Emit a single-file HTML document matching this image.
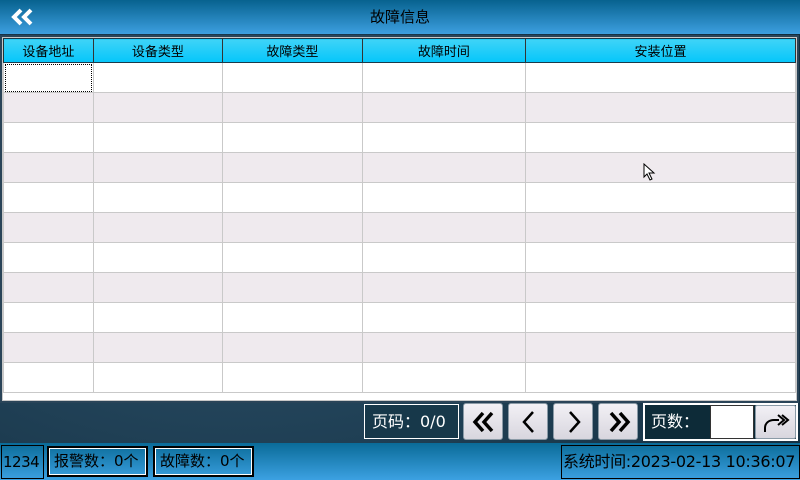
<!DOCTYPE html>
<html><head><meta charset="utf-8"><style>
*{margin:0;padding:0;box-sizing:border-box}
body{width:800px;height:480px;overflow:hidden;font-family:"DejaVu Sans","Noto Sans CJK SC",sans-serif;position:relative;background:radial-gradient(ellipse at 30% 60%,#2a4e66,#173447 70%,#102a3a);}
.hdr{position:absolute;left:0;top:0;width:800px;height:34px;background:linear-gradient(#07628f,#3d9fe0);color:#000;font-size:15px;text-align:center;line-height:34px}
.hdr svg{position:absolute;left:10px;top:8px}
.tbl{position:absolute;left:0px;top:35px;width:799px;height:368px;background:#2a4458;}
.inner{position:absolute;left:2px;top:2px;width:795px;height:364px;background:#fff;border:1px solid #c8c8c8;}
table{border-collapse:collapse;position:absolute;left:0;top:0;table-layout:fixed}
td,th{border:1px solid #c9c9c9;padding:0;font-weight:normal;font-size:13px}
th{height:24px;background:linear-gradient(#3fd3f7,#05c6fb);border-color:#1a3a4a #233 #1a3a4a #233;border-right:1px solid #333;color:#000}
td{height:30px}
tr.a td{background:#efeaee}
.st{position:absolute;left:0;top:443px;width:800px;height:37px;background:linear-gradient(#0a6b98,#3ca1e2)}
.box{position:absolute;border:1px solid #000;font-size:15px;line-height:28px;color:#000}
.btn{position:absolute;top:403px;width:40px;height:37px;background:linear-gradient(#f2f0f5,#d8d6de);border-radius:3px;border:1px solid #8a9aa6}
.btn svg{position:absolute;left:7px;top:7px}
</style></head><body>
<div class="hdr"><svg width="24" height="18" viewBox="0 0 24 18"><path d="M11 2L4 9l7 7M21 2l-7 7 7 7" fill="none" stroke="#fff" stroke-width="4"/></svg>故障信息</div>
<div class="tbl"><div class="inner">
<table>
<colgroup><col style="width:90px"><col style="width:130px"><col style="width:140px"><col style="width:164px"><col style="width:271px"></colgroup>
<tr><th>设备地址</th><th>设备类型</th><th>故障类型</th><th>故障时间</th><th>安装位置</th></tr>
<tr><td style="outline:1px dotted #000;outline-offset:-2px"></td><td></td><td></td><td></td><td></td></tr>
<tr class="a"><td></td><td></td><td></td><td></td><td></td></tr>
<tr><td></td><td></td><td></td><td></td><td></td></tr>
<tr class="a"><td></td><td></td><td></td><td></td><td></td></tr>
<tr><td></td><td></td><td></td><td></td><td></td></tr>
<tr class="a"><td></td><td></td><td></td><td></td><td></td></tr>
<tr><td></td><td></td><td></td><td></td><td></td></tr>
<tr class="a"><td></td><td></td><td></td><td></td><td></td></tr>
<tr><td></td><td></td><td></td><td></td><td></td></tr>
<tr class="a"><td></td><td></td><td></td><td></td><td></td></tr>
<tr><td></td><td></td><td></td><td></td><td></td></tr>
</table>
<svg style="position:absolute;left:640px;top:125px" width="16" height="18" viewBox="0 0 16 18"><path d="M1 1v13l3-3 3 6 2-1-3-6h5z" fill="#fff" stroke="#000" stroke-width="1"/></svg>
</div></div>
<div class="box" style="left:364px;top:404px;width:95px;height:35px;border:1px solid #fff;color:#fff;font-size:16px;line-height:33px;padding-left:7px;background:#17384a">页码：0/0</div>
<div class="btn" style="left:463px"><svg width="26" height="22" viewBox="0 0 26 22"><path d="M12 2L4 11l8 9M21 2l-8 9 8 9" fill="none" stroke="#000" stroke-width="3.5"/></svg></div>
<div class="btn" style="left:508px"><svg width="26" height="22" viewBox="0 0 26 22"><path d="M17 1L8 11l9 10" fill="none" stroke="#000" stroke-width="2.5"/></svg></div>
<div class="btn" style="left:553px"><svg width="26" height="22" viewBox="0 0 26 22"><path d="M9 1l9 10-9 10" fill="none" stroke="#000" stroke-width="2.5"/></svg></div>
<div class="btn" style="left:598px"><svg width="26" height="22" viewBox="0 0 26 22"><path d="M5 2l8 9-8 9M14 2l8 9-8 9" fill="none" stroke="#000" stroke-width="3.5"/></svg></div>
<div class="box" style="left:643px;top:403px;width:155px;height:38px;border:2px solid #fff;background:#0d2b38;color:#fff;font-size:16px;line-height:34px;padding-left:6px">页数：</div>
<div style="position:absolute;left:710px;top:405px;width:44px;height:34px;background:#fff;border:1px solid #333"></div>
<div class="btn" style="left:755px;top:405px;width:41px;height:34px;border-radius:2px"><svg width="28" height="20" viewBox="0 0 28 20" style="left:6px;top:7px"><path d="M3 19v-4c0-5 4-8 9-8h5M16 2l6 5-6 5M20 2l6 5-6 5" fill="none" stroke="#000" stroke-width="2"/></svg></div>
<div class="st"></div>
<div class="box" style="left:1px;top:445px;width:43px;height:34px;line-height:32px;padding-left:1px;font-size:15px;letter-spacing:-0.5px">1234</div>
<div class="box" style="left:47px;top:446px;width:101px;height:31px;border:2px solid #000;box-shadow:inset 0 0 0 1px #fff;padding-left:5px;line-height:27px">报警数：0个</div>
<div class="box" style="left:153px;top:446px;width:101px;height:31px;border:2px solid #000;box-shadow:inset 0 0 0 1px #fff;padding-left:5px;line-height:27px">故障数：0个</div>
<div class="box" style="left:561px;top:445px;width:239px;height:34px;line-height:32px;padding-left:1px;font-size:16px;white-space:nowrap;letter-spacing:-0.3px">系统时间:2023-02-13 10:36:07</div>
</body></html>
